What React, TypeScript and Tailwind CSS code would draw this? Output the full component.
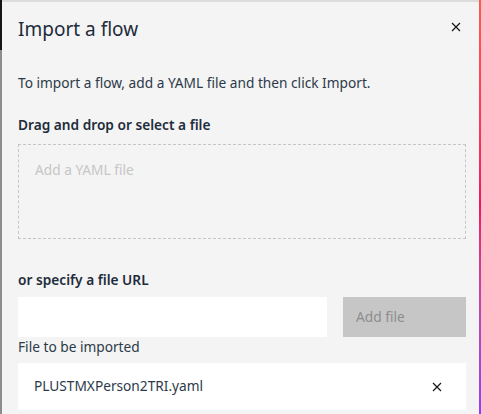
export default function App() {
  return (
    <div
      className="flex w-[481px] h-[414px] overflow-hidden bg-[#f4f4f4]"
      style={{ fontFamily: '"Noto Sans", Arial, sans-serif' }}
    >
      {/* page behind the modal */}
      <div className="w-[2px] flex flex-col shrink-0">
        <div className="h-[50px] bg-[#161616]" />
        <div className="flex-1 bg-[#8d8d8d]" />
      </div>

      <div className="flex-1 flex flex-col border-t-2 border-[#dcdcdc] bg-[#f4f4f4]">
        <div className="flex items-start justify-between pl-4 pr-4 pt-[13px]">
          <h1 className="text-[19px] leading-[28px] text-[#1e2c3b]">Import a flow</h1>
          <button className="mt-[6px] mr-[1px] text-[#161616]">
            <svg width="12" height="12" viewBox="0 0 12 12">
              <path d="M2 2 L10 10 M10 2 L2 10" stroke="currentColor" strokeWidth="1.2" />
            </svg>
          </button>
        </div>

        <div className="flex flex-col pl-4 pr-[13px] text-[13.7px]">
          <p className="mt-[31px] leading-[18px] text-[#2c3a49]">
            To import a flow, add a YAML file and then click Import.
          </p>

          <h2 className="mt-[24px] leading-[18px] font-semibold text-[#1e2c3b]">
            Drag and drop or select a file
          </h2>
          <div className="mt-[10px] h-[95px] border border-dashed border-[#c6c6c6] px-4 pt-[15px]">
            <span className="leading-[18px] text-[#c6c6c6]">Add a YAML file</span>
          </div>

          <h2 className="mt-[32px] leading-[18px] font-semibold text-[#1e2c3b]">
            or specify a file URL
          </h2>
          <div className="mt-[8px] flex gap-4">
            <input className="h-10 flex-1 bg-white outline-none px-4" />
            <button className="h-10 w-[123px] bg-[#c6c6c6] text-left px-[13px] text-[#8d8d8d]">
              Add file
            </button>
          </div>

          <p className="mt-[1px] leading-[18px] text-[#2c3a49]">File to be imported</p>
          <div className="mt-[7px] h-[47px] bg-white flex items-center justify-between pl-4 pr-6">
            <span className="text-[#2c3a49]">PLUSTMXPerson2TRI.yaml</span>
            <svg width="10" height="10" viewBox="0 0 10 10" className="text-[#161616]">
              <path d="M1 1 L9 9 M9 1 L1 9" stroke="currentColor" strokeWidth="1.2" />
            </svg>
          </div>
        </div>
      </div>

      <div className="w-[2px] shrink-0 bg-gradient-to-b from-[#ff5c4a] via-[#ee1464] to-[#8a3ffc]" />
    </div>
  );
}
